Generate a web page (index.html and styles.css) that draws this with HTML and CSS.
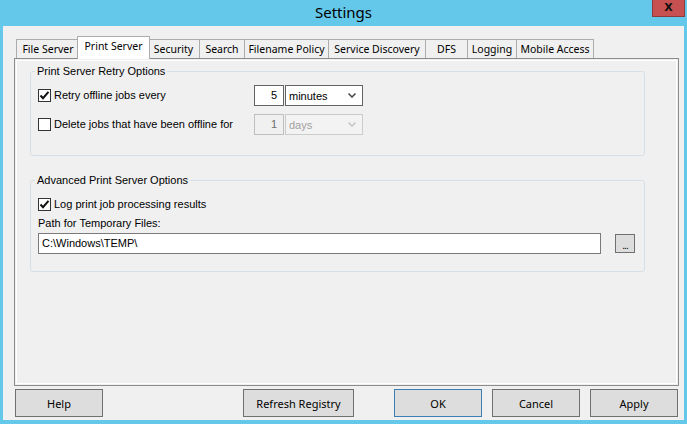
FILE: index.html
```html
<html>

<head>
    <meta charset="utf-8">
    <link rel="stylesheet" href="styles.css">
</head>

<body>
    <div class="window">
        <div class="titlebar">
            <span class="title">Settings</span>
            <div class="close-btn">X</div>
        </div>

        <div class="client">
            <div class="tabs">
                <div class="tab tab-file">File Server</div>
                <div class="tab tab-print active">Print Server</div>
                <div class="tab tab-security">Security</div>
                <div class="tab tab-search">Search</div>
                <div class="tab tab-filename">Filename Policy</div>
                <div class="tab tab-discovery">Service Discovery</div>
                <div class="tab tab-dfs">DFS</div>
                <div class="tab tab-logging">Logging</div>
                <div class="tab tab-mobile">Mobile Access</div>
            </div>

            <div class="tab-panel">
                <fieldset class="group retry">
                    <legend>Print Server Retry Options</legend>
                    <div class="option-row">
                        <div class="check">
                            <span class="box">
                                <svg width="11" height="11" viewBox="0 0 11 11"><path d="M1.5 5.5 L4 8.2 L9.5 1.8" fill="none" stroke="#111" stroke-width="2"/></svg>
                            </span>
                            Retry offline jobs every
                        </div>
                        <div class="num">5</div>
                        <div class="combo">
                            <span>minutes</span>
                            <svg width="8" height="5" viewBox="0 0 8 5"><path d="M0.5 0.5 L4 4 L7.5 0.5" fill="none" stroke="#444" stroke-width="1.5"/></svg>
                        </div>
                    </div>
                    <div class="option-row">
                        <div class="check">
                            <span class="box"></span>
                            Delete jobs that have been offline for
                        </div>
                        <div class="num disabled">1</div>
                        <div class="combo disabled">
                            <span>days</span>
                            <svg width="8" height="5" viewBox="0 0 8 5"><path d="M0.5 0.5 L4 4 L7.5 0.5" fill="none" stroke="#c4c4c4" stroke-width="1.5"/></svg>
                        </div>
                    </div>
                </fieldset>

                <fieldset class="group advanced">
                    <legend>Advanced Print Server Options</legend>
                    <div class="check">
                        <span class="box">
                            <svg width="11" height="11" viewBox="0 0 11 11"><path d="M1.5 5.5 L4 8.2 L9.5 1.8" fill="none" stroke="#111" stroke-width="2"/></svg>
                        </span>
                        Log print job processing results
                    </div>
                    <div class="field-label">Path for Temporary Files:</div>
                    <div class="path-row">
                        <div class="text-input">C:\Windows\TEMP\</div>
                        <div class="browse-btn">...</div>
                    </div>
                </fieldset>
            </div>

            <div class="buttons">
                <div class="btn">Help</div>
                <div class="btn refresh">Refresh Registry</div>
                <div class="btn default">OK</div>
                <div class="btn">Cancel</div>
                <div class="btn">Apply</div>
            </div>
        </div>
    </div>
</body>

</html>
```

FILE: styles.css
```css
body {
    margin: 0;
    width: 687px;
    height: 424px;
    overflow: hidden;
    background: #63c8ea;
    font-family: "Liberation Sans", Arial, sans-serif;
    font-size: 11px;
    color: #000;
}

.window {
    position: relative;
    height: 424px;
}

.titlebar {
    height: 26px;
    display: flex;
    justify-content: center;
    align-items: center;
}

.title {
    font-family: "Noto Sans", sans-serif;
    font-size: 15px;
    margin-top: -3px;
}

.close-btn {
    position: absolute;
    top: 0;
    right: 2px;
    width: 33px;
    height: 17px;
    box-sizing: border-box;
    background: #c75050;
    border: 1px solid #8e3b3b;
    border-top: none;
    font-family: "DejaVu Sans", sans-serif;
    font-weight: bold;
    font-size: 11px;
    text-align: center;
    line-height: 15px;
    color: #111;
}

.client {
    margin: 0 3px;
    height: 394px;
    box-sizing: border-box;
    background: #f0f0f0;
    padding: 10px 5px 0 13px;
}

.tabs {
    display: flex;
    align-items: flex-end;
    height: 22px;
    font-family: "Noto Sans", sans-serif;
    font-size: 10.5px;
}

.tab {
    height: 19px;
    box-sizing: border-box;
    display: flex;
    justify-content: center;
    align-items: center;
    padding-bottom: 1px;
    margin-right: -1px;
    border: 1px solid #acacac;
    border-bottom: none;
    background: #f0f0f0;
    white-space: nowrap;
}

.tab-file { width: 64px; }
.tab-print { width: 69px; }
.tab-security { width: 53px; }
.tab-search { width: 46px; }
.tab-filename { width: 85px; }
.tab-discovery { width: 98px; }
.tab-dfs { width: 43px; }
.tab-logging { width: 50px; }
.tab-mobile { width: 78px; }

.tab.active {
    position: relative;
    z-index: 1;
    width: 73px;
    height: 23px;
    margin: 0 -3px -1px -2px;
    padding-bottom: 4px;
    background: #fff;
}

.tab-panel {
    height: 328px;
    box-sizing: border-box;
    margin-left: -2px;
    border: 1px solid #8c8c8c;
    box-shadow: inset 0 0 0 1px #f0f0f0, inset 0 0 0 2px #fff;
    padding: 6px 33px 0 15px;
}

.group {
    margin: 0;
    border: 1px solid #d5dfe5;
    border-radius: 3px;
    padding: 7px 7px 20px 7px;
    min-width: 0;
}

.group legend {
    padding: 0 2px;
    margin-left: -3px;
    line-height: 13px;
}

.option-row {
    display: flex;
    align-items: center;
    height: 21px;
    margin-bottom: 8px;
}

.option-row:last-child {
    margin-bottom: 0;
}

.option-row .check {
    width: 216px;
}

.check {
    display: flex;
    align-items: center;
    gap: 3px;
    line-height: 13px;
}

.box {
    width: 13px;
    height: 13px;
    box-sizing: border-box;
    border: 1px solid #333;
    background: #fff;
    display: flex;
    justify-content: center;
    align-items: center;
}

.num {
    width: 30px;
    height: 21px;
    box-sizing: border-box;
    border: 1px solid #646464;
    background: #fff;
    text-align: right;
    padding-right: 6px;
    line-height: 19px;
    margin-right: 1px;
}

.num.disabled {
    border-color: #bfbfbf;
    background: #f0f0f0;
    color: #6d6d6d;
}

.combo {
    width: 78px;
    height: 21px;
    box-sizing: border-box;
    border: 1px solid #646464;
    background: #fff;
    display: flex;
    justify-content: space-between;
    align-items: center;
    padding: 0 6px 0 3px;
}

.combo.disabled {
    border-color: #cccccc;
    background: #f3f3f3;
    color: #a0a0a0;
}

.advanced {
    margin-top: 18px;
    padding: 9px 9px 17px 7px;
}

.advanced .check {
    height: 17px;
}

.field-label {
    margin-top: 4px;
    line-height: 13px;
}

.path-row {
    display: flex;
    align-items: center;
    margin-top: 3px;
}

.text-input {
    width: 564px;
    height: 21px;
    box-sizing: border-box;
    border: 1px solid #7a7a7a;
    background: #fff;
    padding-left: 3px;
    line-height: 19px;
}

.browse-btn {
    width: 20px;
    height: 19px;
    box-sizing: border-box;
    margin-left: 14px;
    border: 1px solid #707070;
    background: #dddddd;
    text-align: center;
    line-height: 21px;
    font-size: 10px;
    letter-spacing: -1px;
}

.buttons {
    display: flex;
    margin-top: 3px;
    margin-left: -1px;
    font-family: "Noto Sans", sans-serif;
    font-size: 11px;
}

.btn {
    width: 88px;
    height: 28px;
    box-sizing: border-box;
    border: 1px solid #707070;
    background: #dddddd;
    display: flex;
    justify-content: center;
    align-items: center;
    margin-right: 10px;
}

.btn:first-child {
    margin-right: 140px;
}

.btn.refresh {
    width: 111px;
    margin-right: 40px;
}

.btn.default {
    border-color: #3c7fb1;
    margin-right: 10px;
}

.btn:last-child {
    margin-right: 0;
}
```
